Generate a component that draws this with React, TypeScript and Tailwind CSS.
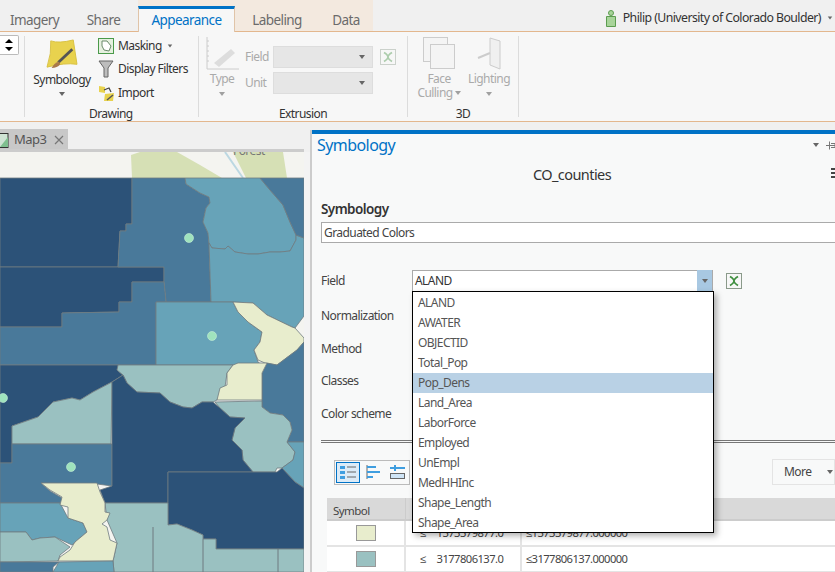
const DARK = "#2c5278";
const MID = "#49799a";
const TEAL = "#67a3b8";
const PALE = "#9ac1c1";
const CREAM = "#e8edcd";

const counties: [string, string][] = [
  [DARK, "0,178 132,178 132,224 126,224 126,231 120,231 118,267 0,267"],
  [DARK, "0,267 164,267 164,282 132,282 132,302 119,302 119,312 62,313 62,327 0,327"],
  [MID, "132,178 185,178 186,184 200,193 209,197 210,203 206,208 203,222 208,233 209,243 211,302 166,302 164,282 164,267 118,267 120,231 126,231 126,224 132,224"],
  [MID, "0,327 62,327 62,313 119,312 119,302 132,302 132,282 164,282 166,302 156,302 156,365 0,365"],
  [TEAL, "185,178 260,178 270,190 283,205 290,222 296,235 296,240 290,251 280,252 270,252 258,254 248,254 235,252 228,246 225,249 212,248 209,243 208,233 203,222 206,208 210,203 209,197 200,193 186,184"],
  [TEAL, "209,243 212,248 225,249 228,246 235,252 248,254 258,254 270,252 280,252 290,251 296,240 296,235 304,238 304,316 295,328 292,327 267,315 253,303 233,302 211,302"],
  [MID, "260,178 304,178 304,238 296,235 290,222 283,205 270,190"],
  [TEAL, "156,302 233,302 238,312 248,322 262,332 260,342 254,350 258,362 262,365 156,365"],
  [CREAM, "233,302 253,303 267,315 292,327 295,328 304,338 304,342 297,350 277,365 265,363 258,360 254,350 260,342 262,332 248,322 238,312"],
  [MID, "304,342 304,442 287,442 292,430 290,422 283,415 270,413 262,407 262,373 267,363 277,365 297,350"],
  [DARK, "0,365 120,365 117,370 123,375 112,382 93,392 80,400 72,398 53,402 38,417 12,426 12,463 0,463"],
  [PALE, "12,426 38,417 53,402 72,398 80,400 93,392 112,382 111,444 12,444"],
  [MID, "12,444 112,444 112,486 97,484 41,483 50,491 62,498 62,503 0,503 0,463 12,463"],
  [PALE, "118,365 233,365 227,373 225,387 217,400 213,402 202,402 192,408 183,407 170,402 160,393 137,392 127,383 123,375 117,370"],
  [CREAM, "233,365 238,363 267,363 262,373 262,400 217,400 220,388 227,385 227,373"],
  [PALE, "215,402 262,401 262,407 270,413 283,415 290,422 292,430 287,442 295,452 293,460 282,468 277,468 275,472 253,472 243,460 242,450 232,440 235,428 245,418 230,417 220,408"],
  [TEAL, "287,442 304,442 304,488 295,482 282,468 293,460 295,452"],
  [DARK, "112,382 123,375 127,383 137,392 160,393 170,402 183,407 192,408 202,402 213,402 220,408 230,417 245,418 235,428 232,440 242,450 243,460 253,472 168,472 168,503 105,503 100,490 112,486"],
  [DARK, "168,472 277,472 282,468 295,482 304,488 304,549 216,549 216,539 203,539 203,535 192,530 177,524 168,525"],
  [PALE, "105,503 168,503 168,525 177,524 192,530 203,535 203,539 216,539 216,549 304,549 304,572 114,572 113,561 117,543 107,520"],
  [TEAL, "0,503 60,503 68,518 83,523 87,532 75,542 72,545 55,537 40,538 32,540 26,532 0,532"],
  [PALE, "0,532 26,532 32,540 40,538 55,537 70,547 60,555 58,561 0,562"],
  [CREAM, "41,483 97,483 100,492 105,503 105,512 110,513 107,520 102,524 107,527 110,540 117,543 113,561 58,561 60,557 70,550 75,542 87,532 83,523 68,518 68,507 60,505 62,497 50,490"],
  [MID, "0,562 59,562 53,567 53,572 0,572"],
  [TEAL, "59,562 113,561 114,572 53,572"],
];

const fields = ["ALAND", "AWATER", "OBJECTID", "Total_Pop", "Pop_Dens", "Land_Area", "LaborForce", "Employed", "UnEmpl", "MedHHInc", "Shape_Length", "Shape_Area"];

function Caret({ className = "" }: { className?: string }) {
  return <span className={`inline-block h-0 w-0 border-x-[3.5px] border-t-[4px] border-x-transparent border-t-[#666] ${className}`} />;
}

function ExcelIcon({ faded = false }: { faded?: boolean }) {
  return (
    <svg width="16" height="16" viewBox="0 0 16 16" className={faded ? "opacity-40" : ""}>
      <rect x="0.5" y="0.5" width="15" height="15" fill="#f7f7f7" stroke="#8a9a8a" />
      <path d="M4 3.5 Q8 6 8 8 T12 12.5 M12 3.5 Q8 6 8 8 T4 12.5" fill="none" stroke="#3f8f3f" strokeWidth="1.7" />
    </svg>
  );
}

function Tab({ label, width }: { label: string; width: string }) {
  return <div className={`flex h-[31px] items-center justify-center pt-[9px] text-[13.5px] text-[#6b6b6b] ${width}`}>{label}</div>;
}

function GroupDivider() {
  return <div className="my-[4px] w-px bg-[#dcdcdc]" />;
}

function Ribbon() {
  return (
    <div className="flex h-[91px] border-y border-[#e3b78e] bg-[#f7f7f7] text-[12px] text-[#333]">
      <div className="flex w-[24px] flex-col pt-[3px]">
        <div className="flex h-[20px] w-[19px] flex-col items-center justify-center gap-[4px] rounded-r-[2px] border border-l-0 border-[#bbb] bg-white">
          <span className="h-0 w-0 border-x-[4px] border-b-[4px] border-x-transparent border-b-black" />
          <span className="h-0 w-0 border-x-[4px] border-t-[4px] border-x-transparent border-t-black" />
        </div>
      </div>
      <GroupDivider />
      {/* Drawing */}
      <div className="flex w-[173px] flex-col">
        <div className="flex flex-1">
          <div className="flex w-[73px] flex-col items-center pl-[1px] pt-[7px]">
            <svg width="32" height="30" viewBox="0 0 34 32">
              <path d="M5 2 Q14 5 29 1 L33 27 Q20 25 1 30 Q6 15 5 2Z" fill="#e8d24e" stroke="#d8c040" />
              <path d="M28 11 L13 25" stroke="#555" strokeWidth="3" />
              <path d="M14 24 Q8 26 6 31 Q12 31 15 27Z" fill="#a9794a" />
            </svg>
            <span className="mt-[3px] leading-[16px]">Symbology</span>
            <Caret className="mt-[4px]" />
          </div>
          <div className="flex flex-col gap-[4px] pt-[5px]">
            <div className="flex h-[18px] items-center gap-[4px]">
              <svg width="16" height="16" viewBox="0 0 16 16">
                <rect x="0.5" y="0.5" width="15" height="15" fill="#e6f0e0" stroke="#4a9a4a" />
                <path d="M4 3 L9 3 L13 8 L11 13 L6 12 L4 8Z" fill="#fff" stroke="#6a8a6a" />
              </svg>
              <span>Masking</span>
              <Caret className="ml-[1px] scale-75" />
            </div>
            <div className="flex h-[20px] items-center gap-[4px]">
              <svg width="16" height="18" viewBox="0 0 16 18">
                <path d="M1 1 H15 L10 8 V17 H6 V8Z" fill="#bdbdbd" stroke="#666" />
              </svg>
              <span>Display Filters</span>
            </div>
            <div className="flex h-[20px] items-center gap-[3px]">
              <svg width="17" height="17" viewBox="0 0 17 17">
                <path d="M1 1 L7 2 L7 8 L1 7Z" fill="#e8d24e" />
                <path d="M7 9 L16 8 L15 16 L6 16Z" fill="#e8d24e" />
                <path d="M6 5 L11 3 L13 7" fill="none" stroke="#444" strokeWidth="1.3" />
                <path d="M15 10 L9 15" stroke="#555" strokeWidth="1.5" />
              </svg>
              <span>Import</span>
            </div>
          </div>
        </div>
        <div className="h-[14px] pl-[64px] leading-[14px]">Drawing</div>
      </div>
      <GroupDivider />
      {/* Extrusion */}
      <div className="flex w-[208px] flex-col text-[#aaa]">
        <div className="flex flex-1">
          <div className="flex w-[46px] flex-col items-center pt-[5px]">
            <svg width="33" height="33" viewBox="0 0 33 33">
              <path d="M1 0 V32 H33 M1 4 H3 M1 9 H3 M1 14 H3 M1 19 H3 M1 24 H3" fill="none" stroke="#ccc" />
              <path d="M8 26 L25 12 L29 16 L13 30Z" fill="#ddd" />
            </svg>
            <span className="mt-[1px] leading-[16px]">Type</span>
            <Caret className="mt-[5px] opacity-60" />
          </div>
          <div className="flex flex-col gap-[4px] pt-[14px]">
            <div className="flex h-[22px] items-center">
              <span className="w-[28px]">Field</span>
              <div className="flex h-[22px] w-[100px] items-center justify-end border border-[#ddd] bg-[#e6e6e6] pr-[7px]"><Caret /></div>
              <span className="ml-[7px]"><ExcelIcon faded /></span>
            </div>
            <div className="flex h-[22px] items-center">
              <span className="w-[28px]">Unit</span>
              <div className="flex h-[22px] w-[100px] items-center justify-end border border-[#ddd] bg-[#e6e6e6] pr-[7px]"><Caret /></div>
            </div>
          </div>
        </div>
        <div className="h-[14px] text-center leading-[14px] text-[#333]">Extrusion</div>
      </div>
      <GroupDivider />
      {/* 3D */}
      <div className="flex w-[110px] flex-col text-[#aaa]">
        <div className="flex flex-1 pl-[5px]">
          <div className="flex w-[52px] flex-col items-center pt-[5px]">
            <svg width="33" height="33" viewBox="0 0 33 33">
              <rect x="0.5" y="0.5" width="24" height="24" fill="#f4f4f4" stroke="#ccc" />
              <rect x="7.5" y="7.5" width="24" height="24" fill="#f4f4f4" stroke="#ccc" />
            </svg>
            <span className="mt-[2px] leading-[14px]">Face</span>
            <span className="flex items-center gap-[2px] leading-[14px]">Culling <Caret className="opacity-60" /></span>
          </div>
          <div className="flex w-[48px] flex-col items-center pt-[5px]">
            <svg width="26" height="33" viewBox="0 0 26 33">
              <path d="M14 1 L24 4 V32 L14 28Z" fill="#f0f0f0" stroke="#ccc" />
              <path d="M2 21 L14 16" stroke="#ccc" strokeWidth="2" />
            </svg>
            <span className="mt-[2px] leading-[14px]">Lighting</span>
            <Caret className="mt-[6px] opacity-60" />
          </div>
        </div>
        <div className="h-[14px] text-center leading-[14px] text-[#333]">3D</div>
      </div>
      <GroupDivider />
    </div>
  );
}

function MapPane() {
  return (
    <div className="flex w-[310px] flex-col">
      <div className="flex h-[25px] items-end bg-[#f0f0f0]">
        <div className="flex h-[20px] w-[68px] items-center bg-[#c8c8c8] pt-[2px] text-[13px] text-[#555]">
          <svg width="9" height="15" viewBox="0 0 9 15" className="mr-[5px]">
            <rect x="-1" y="0.5" width="9" height="14" fill="#cfe3d4" stroke="#333" />
            <path d="M0 14 L8 4 V14Z" fill="#7fbf8f" />
          </svg>
          Map3
          <svg width="10" height="10" viewBox="0 0 10 10" className="ml-[8px]">
            <path d="M1 1 L9 9 M9 1 L1 9" stroke="#777" strokeWidth="1.2" />
          </svg>
        </div>
      </div>
      <div className="mr-[6px] h-[3px] bg-[#ccc]" />
      <div className="flex flex-1 bg-[#f3f3f3]">
        <svg width="304" height="420" viewBox="0 152 304 420" className="block">
          <rect x="0" y="152" width="304" height="420" fill="#f4f4f0" />
          <path d="M131 155 L140 152 H177 L200 165 L222 178 H132Z" fill="#d6e0b5" />
          <path d="M233 152 H283 L287 178 H246 Z" fill="#d6e0b5" />
          <path d="M225 152 L243 178" stroke="#bcd8e2" strokeWidth="2" fill="none" />
          <text x="233" y="155" fontSize="12" fill="#777" fontFamily="Noto Sans, sans-serif">Forest</text>
          {counties.map(([fill, points], i) => (
            <polygon key={i} points={points} fill={fill} stroke="#6f7b80" strokeWidth="0.8" />
          ))}
          <path d="M153 527 V572 M203 539 V572 M278 549 V572" stroke="#6f7b80" fill="none" />
          {[[189, 238], [212, 336], [3, 398], [71, 467]].map(([cx, cy]) => (
            <circle key={cx} cx={cx} cy={cy} r="4.5" fill="#9fe3bd" stroke="#c8efd8" strokeWidth="0.6" />
          ))}
        </svg>
      </div>
    </div>
  );
}

function Row({ swatch, value, label }: { swatch: string; value: string; label: string }) {
  return (
    <div className="flex h-[26px] border-b-2 border-[#e4e4e4] bg-white text-[11.2px] text-[#444]">
      <div className="flex w-[79px] items-center justify-center border-r-2 border-[#e4e4e4]">
        <div className="h-[16px] w-[20px] border border-[#999]" style={{ background: swatch }} />
      </div>
      <div className="flex w-[116px] items-center gap-[11px] border-r-2 border-[#e4e4e4] pl-[14px]">
        <span>≤</span>
        <span>{value}</span>
      </div>
      <div className="flex flex-1 items-center pl-[4px]">{label}</div>
    </div>
  );
}

function SymbologyPane() {
  return (
    <div className="relative mt-[6px] flex-1 overflow-hidden border-l-2 border-[#ccc] bg-[#f8f9f9] text-[12px] text-[#444]">
      <div className="h-[4px] bg-[#0072c6]" />
      <div className="flex h-[22px] items-center pl-[5px] text-[16px] text-[#0072c6]">
        <span className="flex-1">Symbology</span>
        <Caret className="mr-[7px]" />
        <svg width="9" height="9" viewBox="0 0 9 9">
          <path d="M0 4.5 H9 M3.5 0.5 V8.5" stroke="#777" fill="none" />
          <path d="M5 2.5 H9 V6.5 H5" stroke="#777" fill="none" />
        </svg>
      </div>
      <div className="relative mt-[6px] h-[24px] text-center text-[14.5px] leading-[24px] text-[#333]">
        <span className="mr-[3px]">CO_counties</span>
        <div className="absolute right-0 top-[6px] flex w-[4px] flex-col gap-[2px]">
          <span className="h-[2px] bg-[#444]" /><span className="h-[2px] bg-[#444]" /><span className="h-[2px] bg-[#444]" />
        </div>
      </div>
      <div className="mt-[14px] pl-[9px]">
        <div className="h-[18px] text-[13.5px] font-semibold leading-[18px] text-[#333]">Symbology</div>
        <div className="mt-[4px] flex h-[21px] items-center border border-r-0 border-[#aaa] bg-white pl-[2px] text-[#444]">Graduated Colors</div>
      </div>
      <div className="mt-[27px] flex h-[22px] items-center pl-[9px]">
        <span className="w-[91px]">Field</span>
        <div className="flex h-[22px] w-[301px] items-center border border-[#aaa] bg-white pl-[2px] text-[#333]">
          <span className="flex-1">ALAND</span>
          <span className="-my-px flex h-[22px] w-[15px] items-center justify-center bg-[#a8c8e2]"><Caret /></span>
        </div>
        <span className="ml-[13px]"><ExcelIcon /></span>
      </div>
      <div className="pl-[9px]">
        <div className="mt-[15px] h-[18px] leading-[18px]">Normalization</div>
        <div className="mt-[15px] h-[18px] leading-[18px]">Method</div>
        <div className="mt-[14px] h-[18px] leading-[18px]">Classes</div>
        <div className="mt-[15px] h-[18px] leading-[18px]">Color scheme</div>
      </div>
      <div className="ml-[9px] mt-[17px] h-[3px] border-y border-[#777]" />
      <div className="mt-[16px] flex items-center justify-between pl-[22px]">
        <div className="flex h-[25px] w-[76px] items-center gap-[6px] border border-[#bbb] px-[1px]">
          <div className="flex h-[21px] w-[24px] items-center justify-center border border-[#0072c6] bg-[#dcebf7]">
            <svg width="16" height="14" viewBox="0 0 16 14"><path d="M0 1 H5 V4 H0Z M0 6 H5 V9 H0Z M0 11 H5 V14 H0Z" fill="#3f9ee0" /><path d="M7 2 H16 M7 7 H16 M7 12 H16" stroke="#666" /></svg>
          </div>
          <svg width="15" height="14" viewBox="0 0 15 14"><path d="M1 0 V14" stroke="#666" /><path d="M1 2 H10 M1 7 H14 M1 12 H7" stroke="#3f9ee0" strokeWidth="2" /></svg>
          <svg width="15" height="14" viewBox="0 0 15 14" className="ml-[3px]"><path d="M0 3 H15 M5 0 V6" stroke="#3f9ee0" strokeWidth="2" /><rect x="0.5" y="8.5" width="14" height="5" fill="#cfe4f5" stroke="#666" /></svg>
        </div>
        <div className="flex h-[26px] w-[63px] items-center border border-[#e4e4e4] pl-[11px] text-[#444]">
          <span className="flex-1">More</span>
          <Caret className="mr-[1px]" />
        </div>
      </div>
      <div className="ml-[15px] mt-[13px]">
        <div className="flex h-[23px] border-b-2 border-[#ccc] bg-[#d9d9d9] text-[11.5px] leading-[25px]">
          <div className="w-[79px] border-r border-[#ccc] pl-[6px]">Symbol</div>
          <div className="w-[116px] border-r border-[#ccc]" />
          <div className="flex-1" />
        </div>
        <Row swatch={CREAM} value="1373379877.0" label="≤1373379877.000000" />
        <Row swatch={PALE} value="3177806137.0" label="≤3177806137.000000" />
      </div>
      {/* open field dropdown */}
      <div className="absolute left-[100px] top-[161px] h-[242px] w-[302px] border border-black bg-white pt-[1px] shadow-[3px_3px_6px_rgba(0,0,0,0.3)]">
        {fields.map((f) => (
          <div key={f} className={`h-[20px] pl-[5px] leading-[20px] text-[#555] ${f === "Pop_Dens" ? "bg-[#b9d1e5] text-[#333]" : ""}`}>{f}</div>
        ))}
      </div>
    </div>
  );
}

export default function App() {
  return (
    <div className="flex h-[572px] w-[835px] flex-col overflow-hidden bg-[#f0f0f0] font-['Noto_Sans',sans-serif] tracking-[-0.035em]">
      <div className="flex h-[31px] shrink-0">
        <Tab label="Imagery" width="w-[69px]" />
        <Tab label="Share" width="w-[69px]" />
        <div className="flex h-[31px] bg-[#f3e9df]">
          <div className="relative z-10 flex h-[26px] w-[97px] translate-y-[6px] items-center justify-center border-x border-t-[3px] border-x-[#e0c4a8] border-t-[#0072c6] bg-[#f7f7f7] text-[13.5px] text-[#0072c6]">
            Appearance
          </div>
          <Tab label="Labeling" width="w-[84px]" />
          <Tab label="Data" width="w-[54px]" />
        </div>
        <div className="flex flex-1 items-center justify-end gap-[6px] pr-[2px] pt-[5px] text-[12.3px] text-[#333]">
          <svg width="12" height="17" viewBox="0 0 12 17">
            <circle cx="6" cy="3" r="2.5" fill="#a8d49a" stroke="#5c9c50" />
            <path d="M1.5 6.5 H10.5 V16.5 H1.5Z" fill="#a8d49a" stroke="#5c9c50" />
          </svg>
          <span>Philip (University of Colorado Boulder)</span>
          <Caret className="scale-75" />
        </div>
      </div>
      <Ribbon />
      <div className="flex flex-1 overflow-hidden pt-[2px]">
        <MapPane />
        <SymbologyPane />
      </div>
    </div>
  );
}
